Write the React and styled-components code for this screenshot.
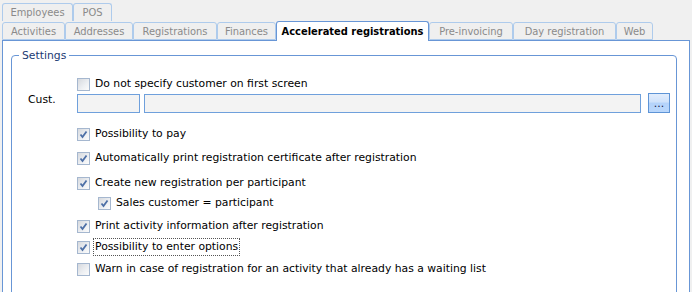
import React from 'react';
import styled, { createGlobalStyle } from 'styled-components';

const GlobalStyle = createGlobalStyle`
  html, body {
    margin: 0;
    padding: 0;
    background: #f0f0f0;
  }
  body {
    font-family: "DejaVu Sans", sans-serif;
    font-size: 10.8px;
    color: #000;
  }
`;

const topTabs = [
  { label: 'Employees', w: 71 },
  { label: 'POS', w: 39 },
];

const tabs = [
  { label: 'Activities', w: 63 },
  { label: 'Addresses', w: 68 },
  { label: 'Registrations', w: 84 },
  { label: 'Finances', w: 59 },
  { label: 'Accelerated registrations', w: 153, active: true },
  { label: 'Pre-invoicing', w: 84 },
  { label: 'Day registration', w: 103 },
  { label: 'Web', w: 37 },
];

const options = [
  { label: 'Possibility to pay', checked: true, mt: 13 },
  { label: 'Automatically print registration certificate after registration', checked: true, mt: 8 },
  { label: 'Create new registration per participant', checked: true, mt: 9 },
  { label: 'Sales customer = participant', checked: true, mt: 4, indent: true },
  { label: 'Print activity information after registration', checked: true, mt: 7 },
  { label: 'Possibility to enter options', checked: true, mt: 5, focused: true },
  { label: 'Warn in case of registration for an activity that already has a waiting list', checked: false, mt: 6 },
];

const CheckBox = ({ checked }) => (
  <Box>
    {checked && (
      <svg width="9" height="9" viewBox="0 0 9 9">
        <path d="M1.5 4.5 L3.5 7 L7.5 1.5" fill="none" stroke="#4d6fa6" strokeWidth="1.8" />
      </svg>
    )}
  </Box>
);

const App = () => {
  return (
    <Page>
      <GlobalStyle />
      <TabRow>
        {topTabs.map((t) => (
          <Tab key={t.label} $w={t.w} $top>{t.label}</Tab>
        ))}
      </TabRow>
      <TabRow>
        {tabs.map((t) => (
          <Tab key={t.label} $w={t.w} $active={t.active}>{t.label}</Tab>
        ))}
      </TabRow>
      <Panel>
        <Group>
          <Legend>Settings</Legend>
          <Form>
            <Spacer />
            <CheckRow $mt={0}>
              <CheckBox checked={false} />
              <CheckLabel>Do not specify customer on first screen</CheckLabel>
            </CheckRow>
            <Label>Cust.</Label>
            <InputRow>
              <Input $w={63} />
              <Input $grow />
              <BrowseButton>...</BrowseButton>
            </InputRow>
            {options.map((o) => (
              <React.Fragment key={o.label}>
                <Spacer />
                <CheckRow $mt={o.mt} $indent={o.indent}>
                  <CheckBox checked={o.checked} />
                  <CheckLabel $focused={o.focused}>{o.label}</CheckLabel>
                </CheckRow>
              </React.Fragment>
            ))}
          </Form>
        </Group>
      </Panel>
    </Page>
  );
};

const Page = styled.div`
  height: 292px;
  padding: 3px 2px 0 2px;
  box-sizing: border-box;
  overflow: hidden;
  display: flex;
  flex-direction: column;
`;

const TabRow = styled.div`
  display: flex;
  align-items: flex-end;
  height: ${(p) => (p.children.length === 2 ? 18 : 19)}px;
`;

const Tab = styled.div`
  box-sizing: border-box;
  width: ${(p) => p.$w}px;
  height: ${(p) => (p.$active ? 20 : 18)}px;
  margin-bottom: ${(p) => (p.$active ? -1 : 0)}px;
  display: flex;
  align-items: center;
  justify-content: center;
  border: 1px solid ${(p) => (p.$active ? '#6896d6' : '#aecbec')};
  border-bottom: ${(p) => (p.$active || p.$top ? 'none' : '1px solid #aecbec')};
  border-radius: 3px 3px 0 0;
  background: ${(p) => (p.$active ? '#fff' : '#efefef')};
  color: ${(p) => (p.$active ? '#000' : '#8a8a8a')};
  font-family: "DejaVu Sans Condensed", "DejaVu Sans", sans-serif;
  font-size: 11px;
  font-weight: ${(p) => (p.$active ? 'bold' : 'normal')};
  white-space: nowrap;
  position: relative;
  z-index: ${(p) => (p.$active ? 2 : 1)};
`;

const Panel = styled.div`
  flex: 1;
  background: #fff;
  border: 1px solid #6896d6;
  border-bottom: none;
  padding: 8px 12px 0 8px;
`;

const Group = styled.fieldset`
  margin: 0;
  padding: 0 6px 20px 16px;
  border: 1px solid #6896d6;
  border-radius: 4px;
`;

const Legend = styled.legend`
  margin-left: -9px;
  padding: 0 3px 0 3px;
  color: #1b3a73;
  line-height: 13px;
`;

const Form = styled.div`
  display: grid;
  grid-template-columns: 49px 1fr;
  padding-top: 14px;
`;

const Spacer = styled.div``;

const Label = styled.div`
  align-self: center;
  margin-bottom: 6px;
`;

const CheckRow = styled.div`
  display: flex;
  align-items: center;
  height: 16px;
  gap: 3px;
  margin-top: ${(p) => p.$mt}px;
  padding-left: ${(p) => (p.$indent ? 21 : 0)}px;
`;

const Box = styled.div`
  box-sizing: border-box;
  width: 13px;
  height: 13px;
  flex: none;
  border: 1px solid #a5b7cf;
  background: linear-gradient(135deg, #d6d9de 0%, #eef0f3 60%, #fbfbfb 100%);
  display: flex;
  align-items: center;
  justify-content: center;
`;

const CheckLabel = styled.span`
  padding: 1px 1px;
  line-height: 14px;
  border: 1px dotted ${(p) => (p.$focused ? '#555' : 'transparent')};
  white-space: nowrap;
`;

const InputRow = styled.div`
  display: flex;
  align-items: center;
  height: 20px;
  margin-top: 1px;
`;

const Input = styled.div`
  box-sizing: border-box;
  height: 19px;
  width: ${(p) => (p.$w ? `${p.$w}px` : 'auto')};
  flex: ${(p) => (p.$grow ? 1 : 'none')};
  margin-right: ${(p) => (p.$grow ? 7 : 4)}px;
  margin-top: 1px;
  background: #f3f3f3;
  border: 1px solid #6fa0dc;
`;

const BrowseButton = styled.div`
  box-sizing: border-box;
  width: 22px;
  height: 20px;
  flex: none;
  border: 1px solid #5e94d6;
  background: linear-gradient(to bottom, #e2edfc 0%, #cfe2fb 45%, #b4d3fa 50%, #b9d7fc 100%);
  display: flex;
  align-items: flex-end;
  justify-content: center;
  padding-bottom: 3px;
  line-height: 10px;
  color: #102040;
`;

export default App;
